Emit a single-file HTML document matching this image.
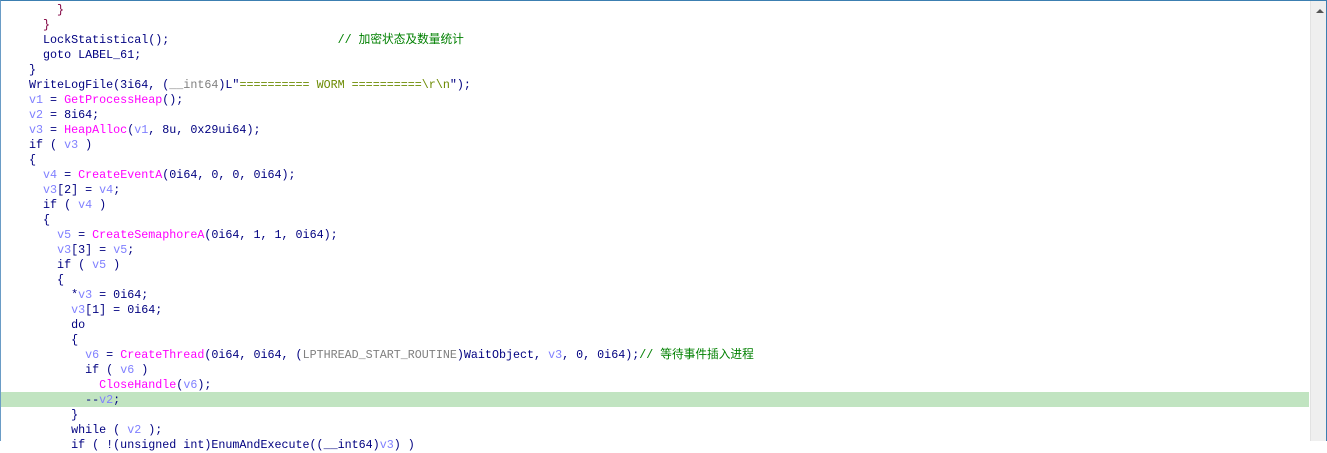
<!DOCTYPE html>
<html><head><meta charset="utf-8"><style>
html,body{margin:0;padding:0;width:1327px;height:441px;overflow:hidden;background:#fff}
#f{position:absolute;left:0;top:0;width:1326px;height:441px;border-top:1px solid #3c7fb1;border-left:1px solid #6a9cc6;box-sizing:border-box}
#sb{position:absolute;left:1310px;top:1px;width:16px;height:440px;background:#efefef;border-left:1px solid #e2e2e2;box-sizing:border-box}
#sb:before{content:"";position:absolute;left:5px;top:8px;border-left:4px solid transparent;border-right:4px solid transparent;border-bottom:4px solid #555}
#rb{position:absolute;left:1326px;top:0;width:1px;height:441px;background:#3c7fb1}
#hl{position:absolute;left:1px;top:392px;width:1308px;height:15px;background:#c1e4c1}
pre{position:absolute;left:29px;top:3px;margin:0;font-family:"Liberation Mono","Noto Sans CJK SC",monospace;font-size:11.7px;line-height:15px;color:#000080}
.f{color:#ff00ff}.v{color:#8080ff}.c{color:#008000}.g{color:#808080}.r{color:#800040}.s{color:#6b8a00}
</style></head><body>
<div id="f"></div><div id="hl"></div>
<pre><span class="r">    }</span>
<span class="r">  }</span>
  LockStatistical();                        <span class="c">// 加密状态及数量统计</span>
  goto LABEL_61;
}
WriteLogFile(3i64, (<span class="g">__int64</span>)L"<span class="s">========== WORM ==========\r\n</span>");
<span class="v">v1</span> = <span class="f">GetProcessHeap</span>();
<span class="v">v2</span> = 8i64;
<span class="v">v3</span> = <span class="f">HeapAlloc</span>(<span class="v">v1</span>, 8u, 0x29ui64);
if ( <span class="v">v3</span> )
{
  <span class="v">v4</span> = <span class="f">CreateEventA</span>(0i64, 0, 0, 0i64);
  <span class="v">v3</span>[2] = <span class="v">v4</span>;
  if ( <span class="v">v4</span> )
  {
    <span class="v">v5</span> = <span class="f">CreateSemaphoreA</span>(0i64, 1, 1, 0i64);
    <span class="v">v3</span>[3] = <span class="v">v5</span>;
    if ( <span class="v">v5</span> )
    {
      *<span class="v">v3</span> = 0i64;
      <span class="v">v3</span>[1] = 0i64;
      do
      {
        <span class="v">v6</span> = <span class="f">CreateThread</span>(0i64, 0i64, (<span class="g">LPTHREAD_START_ROUTINE</span>)WaitObject, <span class="v">v3</span>, 0, 0i64);<span class="c">// 等待事件插入进程</span>
        if ( <span class="v">v6</span> )
          <span class="f">CloseHandle</span>(<span class="v">v6</span>);
        --<span class="v">v2</span>;
      }
      while ( <span class="v">v2</span> );
      if ( !(unsigned int)EnumAndExecute((__int64)<span class="v">v3</span>) )</pre>
<div id="sb"></div><div id="rb"></div>
</body></html>
